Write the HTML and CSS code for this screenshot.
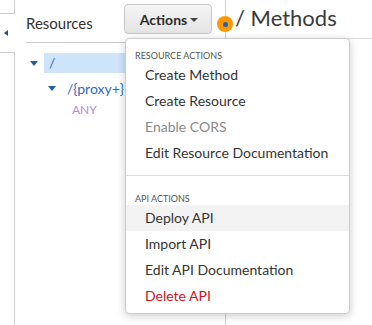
FILE: index.html
```html
<!DOCTYPE html>
<html lang="en">
<head>
  <meta charset="UTF-8" />
  <title>API Gateway - Methods</title>
  <link rel="stylesheet" href="styles.css">
</head>
<body>
  <div class="page">
    <div class="rail">
      <div class="rail-top"></div>
      <div class="rail-toggle"><span class="tri-left"></span></div>
      <div class="rail-bottom"></div>
    </div>

    <div class="resources">
      <div class="res-header">
        <span class="res-title">Resources</span>
        <button class="btn-actions">Actions<span class="caret"></span></button>
      </div>
      <ul class="tree">
        <li class="node selected"><span class="tri-down"></span><span class="path">/</span></li>
        <li class="node child"><span class="tri-down"></span><span class="path">/{proxy+}</span></li>
        <li class="method">ANY</li>
      </ul>
    </div>

    <div class="content">
      <div class="content-header">
        <span class="dot"></span>
        <span class="crumb">/ Methods</span>
      </div>
    </div>

    <div class="menu">
      <div class="menu-label">Resource Actions</div>
      <div class="menu-item">Create Method</div>
      <div class="menu-item">Create Resource</div>
      <div class="menu-item disabled">Enable CORS</div>
      <div class="menu-item">Edit Resource Documentation</div>
      <div class="menu-sep"></div>
      <div class="menu-label">API Actions</div>
      <div class="menu-item hover">Deploy API</div>
      <div class="menu-item">Import API</div>
      <div class="menu-item">Edit API Documentation</div>
      <div class="menu-item danger">Delete API</div>
    </div>
  </div>
</body>
</html>
```

FILE: styles.css
```css
body {
  margin: 0;
  font-family: Lato, "Open Sans", sans-serif;
  color: #333;
  background: #fff;
}
.page {
  position: relative;
  display: flex;
  height: 325px;
  overflow: hidden;
}
.rail {
  width: 15px;
  display: flex;
  flex-direction: column;
}
.rail-top {
  height: 13px;
  border-right: 1px solid #ccc;
  border-bottom: 1px solid #ccc;
}
.rail-toggle {
  height: 38px;
  display: flex;
  align-items: center;
  padding-left: 4px;
}
.tri-left {
  width: 0;
  height: 0;
  border-top: 3px solid transparent;
  border-bottom: 3px solid transparent;
  border-right: 4px solid #2a4f7a;
}
.rail-bottom {
  flex: 1;
  border-right: 1px solid #ccc;
  border-top: 1px solid #ccc;
}
.resources {
  width: 210px;
}
.res-header {
  display: flex;
  align-items: center;
  height: 42px;
  margin-left: 11px;
  border-bottom: 1px solid #ccc;
}
.res-title {
  font-size: 15px;
  margin-top: 4px;
  flex: 1;
}
.btn-actions {
  margin-right: 13px;
  margin-top: -4px;
  width: 88px;
  height: 30px;
  font-family: Lato, sans-serif;
  font-weight: 700;
  font-size: 14px;
  color: #2b2b2b;
  background: linear-gradient(#f5f5f5, #e4e4e4);
  border: 1px solid #c6c6c6;
  border-radius: 4px;
  padding: 0 0 0 2px;
  display: flex;
  align-items: center;
  justify-content: center;
}
.caret {
  margin-left: 3px;
  margin-top: 1px;
  border-left: 4px solid transparent;
  border-right: 4px solid transparent;
  border-top: 4px solid #444;
}
.tree {
  list-style: none;
  margin: 10px 0 0;
  padding: 0;
}
.node {
  display: flex;
  align-items: center;
  height: 20px;
  font-size: 14px;
  color: #2d6bc4;
}
.node.selected {
  margin-left: 15px;
}
.node.selected .tri-down {
  margin-right: 6px;
}
.node.selected .path {
  background: #cde4fa;
  flex: 1;
  height: 20px;
  line-height: 20px;
  padding-left: 5px;
}
.node.child {
  margin-top: 5px;
  margin-left: 33px;
}
.node.child .tri-down {
  margin-right: 11px;
}
.tri-down {
  width: 0;
  height: 0;
  border-left: 4px solid transparent;
  border-right: 4px solid transparent;
  border-top: 5px solid #1f5fa8;
}
.method {
  margin: 4px 0 0 57px;
  font-size: 12px;
  color: #b88bd8;
}
.content {
  flex: 1;
  border-left: 1px solid #ccc;
}
.content-header {
  position: relative;
  height: 38px;
  border-bottom: 1px solid #ddd;
}
.dot {
  position: absolute;
  left: -9px;
  top: 16px;
  width: 16px;
  height: 16px;
  border-radius: 50%;
  background: #f90;
  display: flex;
  align-items: center;
  justify-content: center;
}
.dot::after {
  content: "";
  width: 5px;
  height: 5px;
  border-radius: 50%;
  background: #1d5fc0;
}
.crumb {
  position: absolute;
  left: 9px;
  top: 4px;
  font-size: 22px;
  color: #3a3a3a;
}
.menu {
  position: absolute;
  left: 125px;
  top: 38px;
  width: 223px;
  background: #fff;
  border: 1px solid #ccc;
  border-radius: 4px;
  box-shadow: 0 2px 8px rgba(0, 0, 0, 0.2);
  padding: 10px 0 4px;
}
.menu-label {
  font-size: 9px;
  text-transform: uppercase;
  color: #555;
  padding-left: 9px;
  height: 13px;
  line-height: 13px;
}
.menu-item {
  font-size: 14px;
  height: 26px;
  line-height: 26px;
  padding-left: 19px;
}
.menu-item.disabled {
  color: #8a8a8a;
}
.menu-item.hover {
  background: #f3f3f3;
}
.menu-item.danger {
  color: #d0121c;
}
.menu-sep {
  border-top: 1px solid #ddd;
  margin: 9px 0 16px;
}
```
